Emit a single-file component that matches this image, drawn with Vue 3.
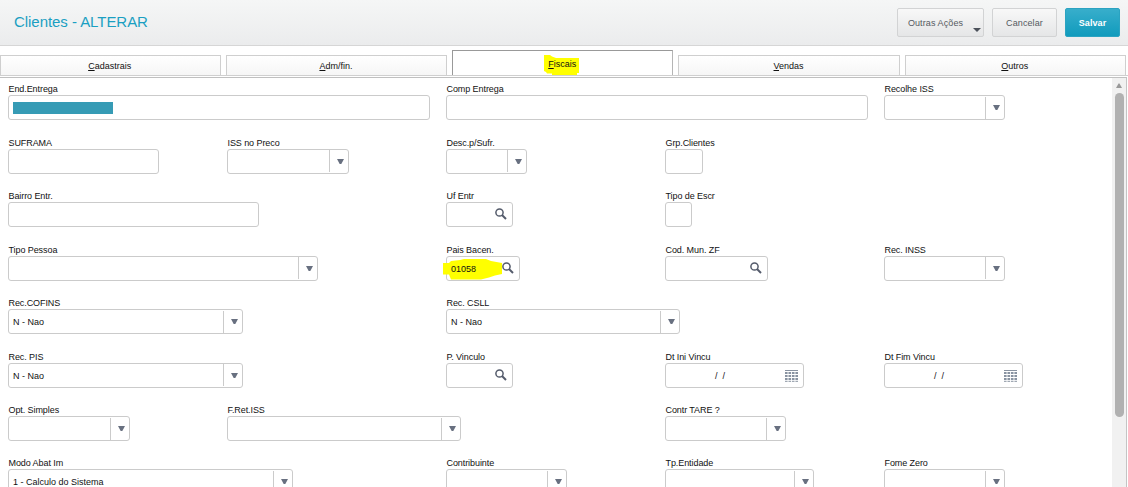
<template>
  <div class="screen">
    <header class="header">
      <h1 class="header__title">Clientes - ALTERAR</h1>
      <div class="header__actions">
        <button class="btn btn--menu">Outras Ações</button>
        <button class="btn">Cancelar</button>
        <button class="btn btn--primary">Salvar</button>
      </div>
    </header>

    <nav class="tabs">
      <div v-for="tab in tabs" :key="tab" class="tab" :class="{ 'tab--active': tab === activeTab }" @click="activeTab = tab">
        <svg v-if="tab === 'Fiscais'" class="mark mark--tab" width="37" height="20" viewBox="0 0 37 20">
          <path d="M1 0h6l2 1.500 4 1.500h23v15h-2v2H9v-1.500H4L3 17 1 16z" />
        </svg>
        <span class="tab__label"><u>{{ tab[0] }}</u>{{ tab.slice(1) }}</span>
      </div>
    </nav>

    <main class="panel">
      <form class="form" @submit.prevent>
        <div v-for="(row, i) in rows" :key="i" class="row">
          <div v-for="field in row" :key="field.label" class="field" :class="'field--col' + field.col">
            <label class="field__label">{{ field.label }}</label>
            <div class="box" :class="'box--' + (field.type || 'text')" :style="{ width: field.width + 'px' }">
              <svg v-if="field.marked" class="mark mark--value" width="59" height="22" viewBox="0 0 59 22">
                <path d="M0 4h6l2-2 9-1 4-1h22l5 2 11 2v11l-7 1.500-6 2-8 2H8l-2-5H0z" />
              </svg>
              <span v-if="field.redacted" class="box__redacted"></span>
              <span class="box__value">{{ field.value }}</span>
              <span v-if="field.type === 'select'" class="box__arrow">
                <svg width="7" height="5" viewBox="0 0 7 5"><path d="M0 0h7L4.300 5H2.700z" /></svg>
              </span>
              <svg v-if="field.type === 'search'" class="box__search" width="12" height="12" viewBox="0 0 12 12">
                <circle cx="4.500" cy="4.500" r="3.600" />
                <path d="M7 7l4 4" />
              </svg>
              <svg v-if="field.type === 'date'" class="box__calendar" width="13" height="12" viewBox="0 0 13 12">
                <path d="M0 0.500h13" />
                <path stroke-dasharray="2.600 0.870" stroke-width="2" d="M0 3h13M0 6h13M0 9h13" />
                <path stroke-dasharray="2.600 0.870" d="M0 11.300h13" />
              </svg>
            </div>
          </div>
        </div>
      </form>
      <div class="scrollbar">
        <svg width="6" height="5" viewBox="0 0 6 5"><path d="M0 5L2.500 0.500h1L6 5z" /></svg>
        <div class="scrollbar__thumb"></div>
      </div>
    </main>
  </div>
</template>

<script setup>
import { ref } from 'vue'

const tabs = ['Cadastrais', 'Adm/fin.', 'Fiscais', 'Vendas', 'Outros']
const activeTab = ref('Fiscais')

const rows = [
  [
    { label: 'End.Entrega', col: 1, width: 422, redacted: true },
    { label: 'Comp Entrega', col: 3, width: 422 },
    { label: 'Recolhe ISS', col: 5, width: 121, type: 'select' }
  ],
  [
    { label: 'SUFRAMA', col: 1, width: 151 },
    { label: 'ISS no Preco', col: 2, width: 122, type: 'select' },
    { label: 'Desc.p/Sufr.', col: 3, width: 81, type: 'select' },
    { label: 'Grp.Clientes', col: 4, width: 38 }
  ],
  [
    { label: 'Bairro Entr.', col: 1, width: 251 },
    { label: 'Uf Entr', col: 3, width: 67, type: 'search' },
    { label: 'Tipo de Escr', col: 4, width: 27 }
  ],
  [
    { label: 'Tipo Pessoa', col: 1, width: 310, type: 'select' },
    { label: 'Pais Bacen.', col: 3, width: 74, type: 'search', value: '01058', marked: true },
    { label: 'Cod. Mun. ZF', col: 4, width: 103, type: 'search' },
    { label: 'Rec. INSS', col: 5, width: 121, type: 'select' }
  ],
  [
    { label: 'Rec.COFINS', col: 1, width: 235, type: 'select', value: 'N - Nao' },
    { label: 'Rec. CSLL', col: 3, width: 234, type: 'select', value: 'N - Nao' }
  ],
  [
    { label: 'Rec. PIS', col: 1, width: 235, type: 'select', value: 'N - Nao' },
    { label: 'P. Vinculo', col: 3, width: 67, type: 'search' },
    { label: 'Dt Ini Vincu', col: 4, width: 139, type: 'date', value: '/ \u00a0/' },
    { label: 'Dt Fim Vincu', col: 5, width: 139, type: 'date', value: '/ \u00a0/' }
  ],
  [
    { label: 'Opt. Simples', col: 1, width: 122, type: 'select' },
    { label: 'F.Ret.ISS', col: 2, width: 234, type: 'select' },
    { label: 'Contr TARE ?', col: 4, width: 121, type: 'select' }
  ],
  [
    { label: 'Modo Abat Im', col: 1, width: 285, type: 'select', value: '1 - Calculo do Sistema' },
    { label: 'Contribuinte', col: 3, width: 121, type: 'select' },
    { label: 'Tp.Entidade', col: 4, width: 149, type: 'select' },
    { label: 'Fome Zero', col: 5, width: 121, type: 'select' }
  ]
]
</script>

<style>
body {
  margin: 0;
  overflow: hidden;
}
</style>

<style scoped>
.screen {
  display: flex;
  flex-direction: column;
  width: 1128px;
  height: 487px;
  overflow: hidden;
  background: #fff;
  font-family: "Liberation Sans", Arial, sans-serif;
  font-size: 9px;
  color: #111;
}
.header {
  box-sizing: border-box;
  flex: none;
  display: flex;
  justify-content: space-between;
  height: 46px;
  padding: 8px 8px 0 14px;
  border-bottom: 1px solid #d6d6d6;
  background: linear-gradient(#f5f6f6, #ebeced);
}
.header__title {
  margin: 4px 0 0;
  font-size: 15px;
  line-height: 19px;
  font-weight: normal;
  letter-spacing: -0.05px;
  color: #1a9fc2;
}
.header__actions {
  display: flex;
  gap: 8px;
}
.btn {
  box-sizing: border-box;
  position: relative;
  width: 65px;
  height: 29px;
  padding: 0;
  border: 1px solid #d2d3d4;
  border-radius: 2px;
  background: linear-gradient(#f8f8f8, #e5e6e7);
  font: inherit;
  letter-spacing: 0.1px;
  color: #555a60;
}
.btn--menu {
  width: 87px;
  padding-right: 10px;
}
.btn--menu::after {
  content: "";
  position: absolute;
  right: 2px;
  bottom: 4px;
  border: 4px solid transparent;
  border-top: 4px solid #4b515a;
  border-bottom: 0;
}
.btn--primary {
  width: 55px;
  border-color: #2ba3c1;
  background: linear-gradient(#38aecb, #109bbd);
  color: #fff;
  font-weight: bold;
}
.tabs {
  flex: none;
  display: flex;
  align-items: flex-end;
  gap: 5px;
  width: 1131px;
  height: 29px;
  margin: 0 0 1px -0.500px;
  border-bottom: 1px solid #cfcfcf;
}
.tab {
  box-sizing: border-box;
  position: relative;
  flex: none;
  display: flex;
  justify-content: center;
  width: 221.300px;
  height: 20px;
  padding-top: 4px;
  border: 1px solid #cfcfcf;
  border-bottom: 0;
  background: linear-gradient(#fff, #f6f6f6);
  line-height: 12px;
}
.tab--active {
  height: 25px;
  padding-top: 7px;
  border-color: #999;
  border-right: 1px solid #b5b5b5;
  background: #fff;
}
.tab__label {
  position: relative;
  left: -0.500px;
}
.mark {
  position: absolute;
  fill: #ffff00;
}
.mark--tab {
  left: 90px;
  top: 4px;
}
.panel {
  box-sizing: border-box;
  flex: 1;
  display: flex;
  min-height: 0;
  width: 1127px;
  border-top: 1px solid #c0c0c0;
  border-right: 1px solid #c4c4c4;
}
.form {
  flex: 1;
  padding: 5.400px 0 0 8px;
}
.row {
  display: grid;
  grid-template-columns: repeat(5, 219px);
  height: 53.450px;
}
.field {
  width: 0;
}
.field--col1 { grid-column: 1; }
.field--col2 { grid-column: 2; }
.field--col3 { grid-column: 3; }
.field--col4 { grid-column: 4; }
.field--col5 { grid-column: 5; }
.field__label {
  display: block;
  height: 12px;
  padding-left: 0.500px;
  line-height: 13.200px;
  letter-spacing: -0.08px;
  white-space: nowrap;
}
.box {
  box-sizing: border-box;
  position: relative;
  display: flex;
  align-items: center;
  height: 25px;
  padding-left: 4px;
  border: 1px solid #cbcbcb;
  border-radius: 3px;
  background: #fff;
}
.box__redacted {
  width: 100px;
  height: 12px;
  background: #369bb5;
}
.box__value {
  position: relative;
  flex: 1;
  padding-top: 1px;
  white-space: nowrap;
}
.box__arrow {
  box-sizing: border-box;
  flex: none;
  display: flex;
  justify-content: center;
  align-items: center;
  width: 19px;
  height: 22px;
  padding-left: 2px;
  border-left: 1px solid #cbcbcb;
  fill: #687080;
}
.box__search {
  position: relative;
  flex: none;
  margin: 0 5px 1px 0;
  fill: none;
  stroke: #545b6b;
  stroke-width: 1.500;
}
.box__search path {
  stroke-width: 2;
}
.box__calendar {
  flex: none;
  margin-right: 5px;
  margin-top: 1px;
  stroke: #8993a1;
}
.box--date .box__value {
  padding-left: 45px;
}
.mark--value {
  left: -4px;
  top: 2px;
}
.scrollbar {
  flex: none;
  display: flex;
  flex-direction: column;
  align-items: center;
  width: 14px;
  padding-top: 5px;
  background: #f1f1f1;
  fill: #999;
}
.scrollbar__thumb {
  width: 9px;
  height: 324px;
  margin-top: 5px;
  border-radius: 4.500px;
  background: #b1b1b1;
}
</style>
